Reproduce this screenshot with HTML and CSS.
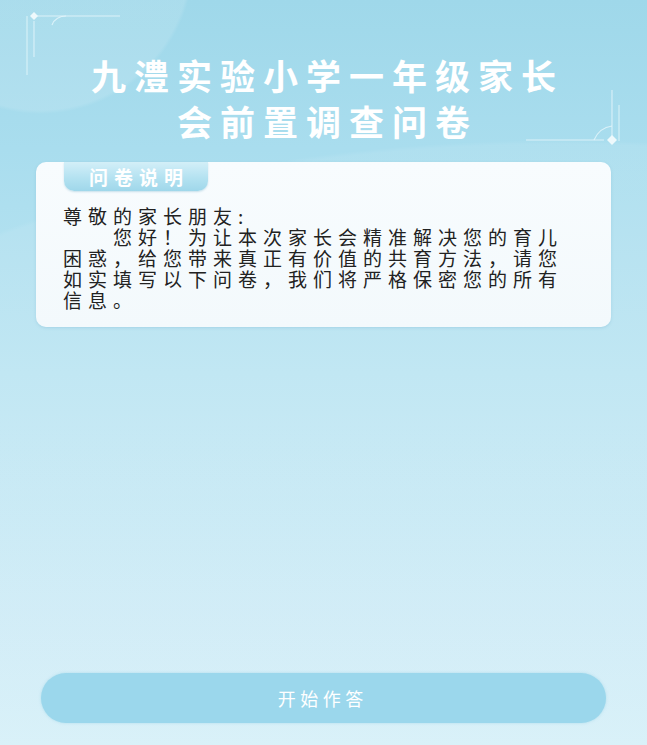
FILE: index.html
```html
<!DOCTYPE html>
<html lang="zh-CN">
<head>
<meta charset="utf-8">
<title>九澧实验小学一年级家长会前置调查问卷</title>
<link rel="stylesheet" href="styles.css">
</head>
<body>
<div class="page">
  <svg class="deco deco-tl" width="110" height="80" viewBox="0 0 110 80" aria-hidden="true">
    <path d="M14 11 H100" stroke="#e6f6fb" stroke-width="1.2" fill="none" opacity="0.85"/>
    <path d="M7 11 V70" stroke="#e6f6fb" stroke-width="1.2" fill="none" opacity="0.7"/>
    <path d="M14 16 V52" stroke="#e6f6fb" stroke-width="1.2" fill="none" opacity="0.75"/>
    <path d="M46 11 C40 11 34 14 32 20" stroke="#e6f6fb" stroke-width="1.2" fill="none" opacity="0.8"/>
    <path d="M14 7 L18 11 L14 15 L10 11 Z" fill="#eef9fc"/>
  </svg>
  <svg class="deco deco-br" width="110" height="70" viewBox="0 0 110 70" aria-hidden="true">
    <path d="M6 55 H84" stroke="#e6f6fb" stroke-width="1.2" fill="none" opacity="0.85"/>
    <path d="M92 5 V55" stroke="#e6f6fb" stroke-width="1.2" fill="none" opacity="0.75"/>
    <path d="M99 20 V56" stroke="#e6f6fb" stroke-width="1.2" fill="none" opacity="0.7"/>
    <path d="M74 55 C78 46 84 42 92 41" stroke="#e6f6fb" stroke-width="1.2" fill="none" opacity="0.8"/>
    <path d="M92 50 L97 55 L92 60 L87 55 Z" fill="#eef9fc"/>
  </svg>

  <h1 class="title">九澧实验小学一年级家长<br>会前置调查问卷</h1>

  <section class="card">
    <div class="tab">问卷说明</div>
    <p class="intro">尊敬的家长朋友:<br>　　您好！为让本次家长会精准解决您的育儿困惑，给您带来真正有价值的共育方法，请您如实填写以下问卷，我们将严格保密您的所有信息。</p>
  </section>

  <div class="spacer"></div>

  <button class="start" type="button">开始作答</button>
</div>
</body>
</html>
```

FILE: styles.css
```css
* { box-sizing: border-box; }

html, body {
  margin: 0;
  padding: 0;
}

body {
  font-family: "Noto Sans CJK SC", "Noto Sans", "Liberation Sans", sans-serif;
  background: #d4eff7;
}

.page {
  position: relative;
  width: 647px;
  min-height: 745px;
  display: flex;
  flex-direction: column;
  overflow: hidden;
  background:
    radial-gradient(circle at 40px -40px, rgba(255,255,255,0.12) 0, rgba(255,255,255,0.12) 150px, rgba(255,255,255,0) 154px),
    radial-gradient(ellipse 900px 420px at 560px 560px, rgba(255,255,255,0.08) 0, rgba(255,255,255,0.08) 99%, rgba(255,255,255,0) 100%),
    linear-gradient(180deg, #9fd8ea 0%, #a9ddee 20%, #bce5f2 50%, #cdebf6 80%, #d6f0f8 100%);
}

.deco {
  position: absolute;
  pointer-events: none;
}

.deco-tl { left: 20px; top: 5px; }
.deco-br { left: 520px; top: 85px; }

.title {
  margin: 52px 0 0;
  padding-left: 8px;
  text-align: center;
  color: #ffffff;
  font-size: 35px;
  font-weight: 700;
  line-height: 46px;
  letter-spacing: 8px;
}

.card {
  margin: 18px 36px 0;
  padding: 0 38px 17px 27px;
  background: linear-gradient(180deg, #f8fcfe 0%, #f3f9fc 100%);
  border-radius: 10px;
  box-shadow: 0 1px 3px rgba(90, 160, 190, 0.25);
}

.tab {
  width: 144px;
  height: 29px;
  margin-left: 1px;
  display: flex;
  align-items: center;
  justify-content: center;
  background: linear-gradient(180deg, #d3eff8 0%, #b4e2f1 55%, #9fd7ea 100%);
  border-radius: 0 0 10px 10px;
  color: #ffffff;
  font-size: 19px;
  font-weight: 700;
  letter-spacing: 6px;
  padding-left: 6px;
  box-shadow: 0 1px 2px rgba(90, 160, 190, 0.3);
}

.intro {
  margin: 14px 0 0;
  color: #222222;
  font-size: 19px;
  line-height: 21px;
  letter-spacing: 6px;
}

.spacer { flex: 1; }

.start {
  margin: 0 41px 22px;
  height: 50px;
  border: 0;
  border-radius: 25px;
  background: #9bd7ec;
  color: #ffffff;
  font-family: "Noto Sans CJK SC", "Noto Sans", sans-serif;
  font-size: 18px;
  letter-spacing: 4.5px;
  padding-left: 4.5px;
  box-shadow: 0 0 3px rgba(150, 210, 230, 0.6);
}
```
